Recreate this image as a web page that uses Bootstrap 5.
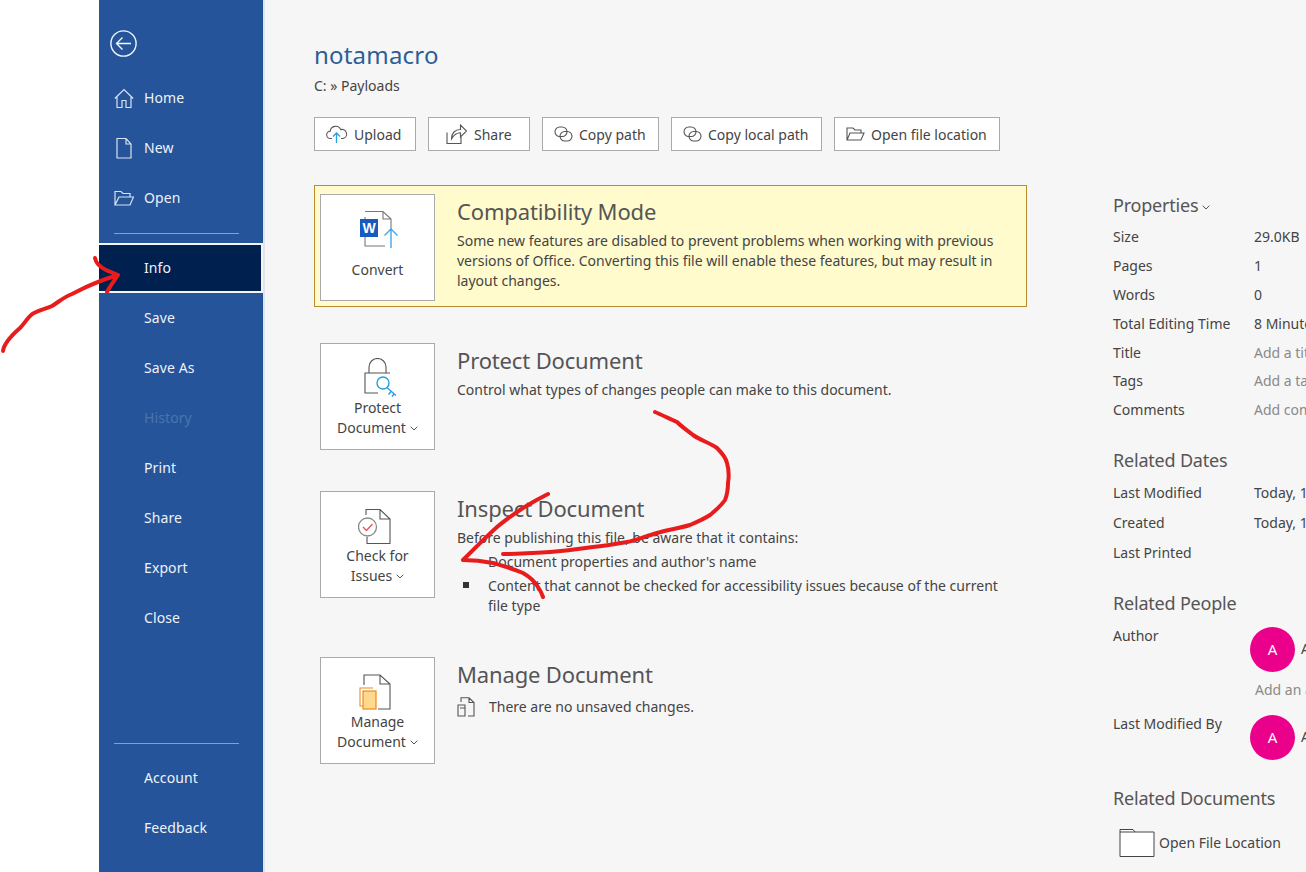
<!DOCTYPE html>
<html lang="en">
<head>
<meta charset="utf-8">
<title>notamacro - Info</title>
<link href="https://cdn.jsdelivr.net/npm/bootstrap@5.3.0/dist/css/bootstrap.min.css" rel="stylesheet">
<style>
html,body{height:872px;overflow:hidden;background:#fff}
body{font-family:"Noto Sans","Open Sans",sans-serif;font-size:14px;line-height:20px;color:#444}
.stage{height:872px;width:1306px}
.gutter{width:99px;flex:none}
.side{width:166px;flex:none;height:872px;background:#25549b;border-right:2px solid #dfe3ea;color:#eef2f8;overflow:hidden}
.back{height:73px;flex:none;padding:30px 0 0 11px}
.side .nav{flex:none}
.side .nav-link{height:50px;flex:none;padding:0 0 0 15px;display:flex;align-items:center;color:#eef2f8;letter-spacing:.1px}
.side .nav-link svg{width:20px;height:24px;margin-right:10px;flex:none}
.side .nav-link.noicon{padding-left:45px}
.side .nav-link.active{background:#002050;border:2px solid #f2f4f8;border-left:0;padding-left:45px}
.side .nav-link.disabled{color:#4a74ad}
.side hr{margin:10px 0 9px 15px;width:125px;border:0;border-top:1px solid #7ea3cf;opacity:1;flex:none}
.side hr.low{margin-top:100px}
.pane{flex:1;background:#f6f6f6;height:872px;padding-left:49px;overflow:hidden}
.leftcol{width:713px;flex:none;padding-top:39px}
.doc-title{font-size:24px;line-height:32px;color:#2b5f97;margin:0 0 5px;font-weight:400;letter-spacing:.2px}
.crumb{line-height:20px;margin-bottom:21px}
.acts{gap:12px}
.act{height:34px;background:#fff;border:1px solid #aaa;border-radius:0;padding:0 0 0 11px;font-size:14px;color:#444;display:flex;align-items:center;gap:6px;white-space:nowrap}
.act:hover{background:#fff;color:#444;border-color:#aaa}
.w102{width:102px}.w117{width:117px}.w151{width:151px}.w166{width:166px}
.blockrow{display:flex;border:1px solid transparent;padding:8px 5px 5px}
.blockrow.warn{background:#fffbcd;border-color:#b98d2c;margin-top:34px}
.m27{margin-top:27px}.m26{margin-top:26px}.m22{margin-top:22px}
.big{width:115px;height:107px;flex:none;background:#fff;border:1px solid #aaa;border-radius:0;padding:14px 0 0;display:flex;flex-direction:column;align-items:center;color:#444;font-size:14px;line-height:20px}
.big:hover{background:#fff;color:#444;border-color:#aaa}
.big>svg{width:40px;height:40px;flex:none}
.one{margin-top:11px}
.chev{display:inline-block;width:8px;height:5px;margin-left:4px;vertical-align:2px}
.body-txt{margin-left:22px;padding-top:2px;flex:1}
.sec-h{font-size:22px;line-height:30px;font-weight:400;margin:0 0 5px;color:#555;letter-spacing:-.15px}
.sec-p{margin:0}
.bul{list-style:none;padding:4px 0 0;margin:0}
.bul li{position:relative;padding-left:31px;margin-bottom:4px}
.bul li.dot::before{content:"";position:absolute;left:6px;top:6px;width:6px;height:6px;background:#333}
.unsaved{margin-top:8px;gap:14px}
.rightcol{margin-left:86px;padding-top:193px;white-space:nowrap;width:240px;flex:none}
.prop-h{font-size:18px;line-height:24px;font-weight:400;margin:0;color:#555;letter-spacing:-.2px}
.prop{display:flex;height:28.8px;align-items:center}
.prop.tall{height:30px}
.prop .k{width:141px;flex:none}
.muted-v{color:#8a8a8a}
.person{display:flex;height:45px}
.person .k{width:137px;flex:none;margin-top:-1px}
.ava{width:45px;height:45px;border-radius:50%;background:#ea008b;color:#fff;font-size:15px;flex:none;margin-right:6px}
.addl{margin-left:142px;height:20px;color:#8a8a8a;margin-top:8px}
.folderrow{margin:18px 0 0 6px;height:30px}
.ink{position:absolute;left:0;top:0;width:1306px;height:872px;pointer-events:none}
.props-first{margin-top:6px}
.dates{margin-top:23px}
.prop.first{margin-top:6px}
.people{margin-top:23px}
.mt-peo{margin-top:12px}
.mt-lm{margin-top:15px}
.docs{margin-top:26px}
</style>
</head>
<body>
<div class="stage d-flex position-relative">
  <div class="gutter"></div>
  <nav class="side d-flex flex-column">
    <div class="back">
      <svg width="27" height="27" viewBox="0 0 27 27" fill="none" stroke="#f2f5fa" stroke-width="1.4"><circle cx="13.5" cy="13.5" r="12.6"/><path d="M6.5 13.5H21M12.5 7.5l-6 6 6 6"/></svg>
    </div>
    <div class="nav flex-column flex-nowrap">
      <a class="nav-link" href="#"><svg viewBox="0 0 20 24" fill="none" stroke="#d9e2ef" stroke-width="1.2"><path d="M.8 12.5 10 3.500l9.200 9M3 11v10.500h5V14.500h4V21.500h5V11"/></svg>Home</a>
      <a class="nav-link" href="#"><svg viewBox="0 0 20 24" fill="none" stroke="#d9e2ef" stroke-width="1.2"><path d="M3 2.500h9l5 5.500v14H3zM12 2.500V8h5"/></svg>New</a>
      <a class="nav-link" href="#"><svg viewBox="0 0 20 24" fill="none" stroke="#d9e2ef" stroke-width="1.2"><path d="M1 19V5.500h6l2 2h7V11M1 19h15l3.500-8H5z"/></svg>Open</a>
      <hr>
      <a class="nav-link active" href="#">Info</a>
      <a class="nav-link noicon" href="#">Save</a>
      <a class="nav-link noicon" href="#">Save As</a>
      <a class="nav-link noicon disabled" href="#">History</a>
      <a class="nav-link noicon" href="#">Print</a>
      <a class="nav-link noicon" href="#">Share</a>
      <a class="nav-link noicon" href="#">Export</a>
      <a class="nav-link noicon" href="#">Close</a>
      <hr class="low">
      <a class="nav-link noicon" href="#">Account</a>
      <a class="nav-link noicon" href="#">Feedback</a>
      <a class="nav-link noicon" href="#">Options</a>
    </div>
  </nav>
  <main class="pane d-flex">
    <div class="leftcol">
      <h1 class="doc-title">notamacro</h1>
      <div class="crumb">C: » Payloads</div>
      <div class="d-flex acts">
        <button class="btn act w102" type="button"><svg width="22" height="20" viewBox="0 0 22 20" fill="none" stroke="#555" stroke-width="1.1"><path d="M6 14.500H4.500a3.700 3.700 0 0 1-.3-7.400 5.500 5.500 0 0 1 10.500-1.500 4.500 4.500 0 0 1 2.500 8.900H15"/><path d="M10.500 19V9M7 12.500l3.500-3.500 3.500 3.500" stroke="#2a9fe0" stroke-width="1.300"/></svg>Upload</button>
        <button class="btn act w102" type="button"><svg width="28" height="22" viewBox="0 0 28 22" fill="none" stroke="#555" stroke-width="1.1"><path d="M7 9.500V20.500H21V14M11.500 16c0-6 3.500-9.500 9-9.500V2l6 6-6 6V9.800c-4 0-6.500 2-9 6.200z"/></svg>Share</button>
        <button class="btn act w117" type="button"><svg width="19" height="18" viewBox="0 0 19 18" fill="none" stroke="#555" stroke-width="1.100"><rect x="1" y="2" width="12" height="9.500" rx="4.700"/><rect x="6" y="6.500" width="12" height="9.500" rx="4.700"/></svg>Copy path</button>
        <button class="btn act w151" type="button"><svg width="19" height="18" viewBox="0 0 19 18" fill="none" stroke="#555" stroke-width="1.100"><rect x="1" y="2" width="12" height="9.500" rx="4.700"/><rect x="6" y="6.500" width="12" height="9.500" rx="4.700"/></svg>Copy local path</button>
        <button class="btn act w166" type="button"><svg width="19" height="18" viewBox="0 0 19 18" fill="none" stroke="#555" stroke-width="1.100"><path d="M1 15V3h6l2 2h6v3M1 15h14l3-7H4z"/></svg>Open file location</button>
      </div>

      <section class="blockrow warn">
        <button class="btn big" type="button">
          <svg viewBox="0 0 40 40" fill="none"><path d="M7 8V37H27M7 2.500H25L33 10V21M25 2.500V10H33" stroke="#777" stroke-width="1.100"/><rect x="2" y="10" width="18" height="18" fill="#185abd"/><text x="11" y="24" text-anchor="middle" font-family="Liberation Sans,sans-serif" font-weight="700" font-size="14" fill="#fff">W</text><path d="M33 39V20M26.500 26.500 33 20l6.500 6.500" stroke="#41a5ee" stroke-width="1.400"/></svg>
          <span class="one">Convert</span>
        </button>
        <div class="body-txt">
          <h2 class="sec-h">Compatibility Mode</h2>
          <p class="sec-p">Some new features are disabled to prevent problems when working with previous versions of Office. Converting this file will enable these features, but may result in layout changes.</p>
        </div>
      </section>

      <section class="blockrow m27">
        <button class="btn big" type="button">
          <svg viewBox="0 0 40 40" fill="none"><path d="M11 15V9a8.500 8.500 0 0 1 17 0v6M32 15H7V35H20" stroke="#555" stroke-width="1.100"/><circle cx="25" cy="25" r="6" fill="#fff" stroke="#2a9fe0" stroke-width="1.400"/><path d="M29 29.500 38 37.500M33 33.500l-2.500 3M36 36l-2 2.500" stroke="#2a9fe0" stroke-width="1.400"/></svg>
          <span>Protect</span>
          <span>Document<svg class="chev" viewBox="0 0 8 5" fill="none" stroke="#555" stroke-width="1"><path d="M.7.7 4 4 7.300.7"/></svg></span>
        </button>
        <div class="body-txt">
          <h2 class="sec-h">Protect Document</h2>
          <p class="sec-p">Control what types of changes people can make to this document.</p>
        </div>
      </section>

      <section class="blockrow m26">
        <button class="btn big" type="button">
          <svg viewBox="0 0 40 40" fill="none"><path d="M8 9V3.500H22L32 13V37.500H9V31M22 3.500V13H32" stroke="#555" stroke-width="1.100"/><circle cx="9.500" cy="21" r="9" stroke="#888" stroke-width="1.300" fill="#fff"/><path d="M5 21l3.500 3.500L14.500 18" stroke="#e8545c" stroke-width="1.400"/></svg>
          <span>Check for</span>
          <span>Issues<svg class="chev" viewBox="0 0 8 5" fill="none" stroke="#555" stroke-width="1"><path d="M.7.7 4 4 7.300.7"/></svg></span>
        </button>
        <div class="body-txt">
          <h2 class="sec-h">Inspect Document</h2>
          <p class="sec-p">Before publishing this file, be aware that it contains:</p>
          <ul class="bul">
            <li>Document properties and author's name</li>
            <li class="dot">Content that cannot be checked for accessibility issues because of the current file type</li>
          </ul>
        </div>
      </section>

      <section class="blockrow m22">
        <button class="btn big" type="button">
          <svg viewBox="0 0 40 40" fill="none"><path d="M6 13V3H22L32 12V37H20M22 3V12H32" stroke="#555" stroke-width="1.100"/><path d="M5 34H2V16H15" stroke="#ed8b1e" stroke-width="1.100"/><rect x="5" y="19" width="13" height="18" fill="#ffd98c" stroke="#ed8b1e" stroke-width="1.200"/></svg>
          <span>Manage</span>
          <span>Document<svg class="chev" viewBox="0 0 8 5" fill="none" stroke="#555" stroke-width="1"><path d="M.7.7 4 4 7.300.7"/></svg></span>
        </button>
        <div class="body-txt">
          <h2 class="sec-h">Manage Document</h2>
          <div class="d-flex align-items-center unsaved">
            <svg width="18" height="20" viewBox="0 0 18 20" fill="none" stroke="#555" stroke-width="1.100"><path d="M4 5V.800H12L17 5.500V19H11M12 .8V5.500H17M1 8H8V19H1zM3 11H8"/></svg>
            <p class="sec-p">There are no unsaved changes.</p>
          </div>
        </div>
      </section>
    </div>

    <aside class="rightcol">
      <h3 class="prop-h">Properties<svg class="chev" viewBox="0 0 8 5" fill="none" stroke="#555" stroke-width="1"><path d="M.7.7 4 4 7.300.7"/></svg></h3>
      <div class="prop props-first"><span class="k">Size</span><span>29.0KB</span></div>
      <div class="prop"><span class="k">Pages</span><span>1</span></div>
      <div class="prop"><span class="k">Words</span><span>0</span></div>
      <div class="prop"><span class="k">Total Editing Time</span><span>8 Minutes</span></div>
      <div class="prop"><span class="k">Title</span><span class="muted-v">Add a title</span></div>
      <div class="prop"><span class="k">Tags</span><span class="muted-v">Add a tag</span></div>
      <div class="prop"><span class="k">Comments</span><span class="muted-v">Add comments</span></div>

      <h3 class="prop-h dates">Related Dates</h3>
      <div class="prop tall first"><span class="k">Last Modified</span><span>Today, 14:00</span></div>
      <div class="prop tall"><span class="k">Created</span><span>Today, 14:00</span></div>
      <div class="prop tall"><span class="k">Last Printed</span></div>

      <h3 class="prop-h people">Related People</h3>
      <div class="person mt-peo"><span class="k">Author</span><div class="ava d-flex align-items-center justify-content-center">A</div><span class="align-self-center">Admin</span></div>
      <div class="addl">Add an author</div>
      <div class="person mt-lm"><span class="k">Last Modified By</span><div class="ava d-flex align-items-center justify-content-center">A</div><span class="align-self-center">Admin</span></div>

      <h3 class="prop-h docs">Related Documents</h3>
      <div class="folderrow d-flex align-items-center gap-1">
        <svg width="36" height="30" viewBox="0 0 36 30" fill="#fff" stroke="#444" stroke-width="1"><path d="M1 28.500V1.500H14L16 4H35V28.500z"/><path d="M1 4H16" fill="none"/></svg>
        <span>Open File Location</span>
      </div>
    </aside>
  </main>
  <svg class="ink" viewBox="0 0 1306 872" fill="none" stroke="#e81c1c" stroke-width="4" stroke-linecap="round" stroke-linejoin="round">
    <path d="M3 351C4 343 12 335 20 328 26 322 28 316 34 313 42 309 46 309 52 306 60 301 64 297 72 294 84 288 92 283 118 275M95 258C96 264 100 267 106 270 110 272 114 273 118 275 114 281 110 286 107 292"/>
    <path d="M655 412C662 415 670 419 677 422 682 427 688 431 693 435 700 440 710 443 717 448 722 453 726 458 727 463 729 470 729 477 728 483 728 490 727 495 725 500 721 506 716 510 710 515 704 519 697 522 690 525 680 528 668 530 657 533 646 536 637 540 627 542 616 544 605 546 593 547 579 549 565 551 550 552 535 553 519 554 503 554"/>
    <path d="M548 494C540 498 531 503 523 508 514 514 505 520 497 527 486 537 474 549 463 560 473 560 483 561 493 563 503 566 514 569 523 573 530 577 535 582 538 587 540 590 542 594 543 597"/>
  </svg>
</div>
<script src="https://cdn.jsdelivr.net/npm/bootstrap@5.3.0/dist/js/bootstrap.bundle.min.js"></script>
</body>
</html>
